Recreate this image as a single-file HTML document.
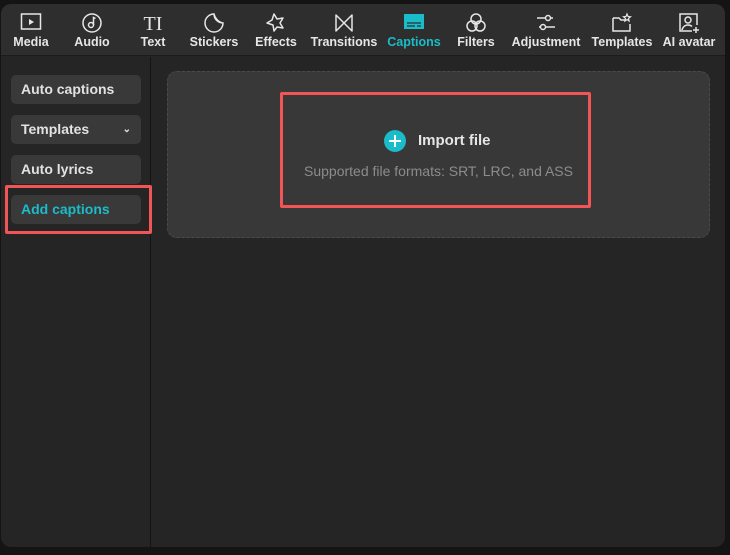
<!DOCTYPE html>
<html><head><meta charset="utf-8"><style>
*{margin:0;padding:0;box-sizing:border-box}
body{width:730px;height:555px;background:#141414;font-family:"Liberation Sans",sans-serif;position:relative;overflow:hidden}
.panel{position:absolute;left:1px;top:4px;width:724px;height:543px;background:#252525;border-radius:10px;overflow:hidden}
.top{position:absolute;left:0;top:0;width:724px;height:52px;background:#2e2e2e;border-bottom:1px solid #1c1c1c}
.it{position:absolute;top:0;height:52px;text-align:center;transform:translateX(-50%);color:#e6e6e6;font-size:12.5px;font-weight:bold;white-space:nowrap}
.it svg{position:absolute;left:50%;top:8px;transform:translateX(-50%)}
.it span{position:absolute;left:50%;top:31px;transform:translateX(-50%)}
.it.a{color:#1bbcc9}
.side{position:absolute;left:0;top:53px;width:150px;height:490px;border-right:1px solid #141414}
.btn{position:absolute;left:10px;width:130px;height:29px;background:#393939;border-radius:5px;color:#e2e2e2;font-size:14px;font-weight:bold;line-height:29px;padding-left:10px}
.red{position:absolute;border:3px solid #f25555;border-radius:2px}
.card{position:absolute;left:166px;top:67px;width:543px;height:167px;background:#383838;border:1px dashed #4a4a4a;border-radius:10px}
</style></head><body>
<div class="panel">
<div class="top">
<div class="it" style="left:30px"><svg width="22" height="20" viewBox="0 0 22 20"><rect x="1.5" y="2" width="19" height="15" fill="none" stroke="#e6e6e6" stroke-width="1.5"/><path d="M9 7l5 3-5 3z" fill="#e6e6e6"/></svg><span>Media</span></div>
<div class="it" style="left:91px"><svg width="22" height="22" viewBox="0 0 22 22"><circle cx="11" cy="11" r="9" fill="none" stroke="#e6e6e6" stroke-width="1.5"/><circle cx="10" cy="13" r="2.5" fill="none" stroke="#e6e6e6" stroke-width="1.5"/><path d="M12.5 13V5.5l2 1" fill="none" stroke="#e6e6e6" stroke-width="1.5"/></svg><span>Audio</span></div>
<div class="it" style="left:152px;"><svg width="24" height="22" viewBox="0 0 24 22"><text x="12" y="18" text-anchor="middle" font-family="Liberation Serif" font-weight="normal" font-size="20" fill="#e6e6e6">TI</text></svg><span>Text</span></div>
<div class="it" style="left:213px"><svg width="22" height="22" viewBox="0 0 22 22"><path d="M20 11a9 9 0 1 1-9-9c0 5 4 9 9 9zM11 2c1 4 4 8 9 9" fill="none" stroke="#e6e6e6" stroke-width="1.5"/></svg><span>Stickers</span></div>
<div class="it" style="left:275px"><svg width="22" height="22" viewBox="0 0 22 22"><path d="M9 2l3 5 6-1-3 5 3 5-6-1-3 4-1-6-6-2 5-3z" fill="none" stroke="#e6e6e6" stroke-width="1.5" stroke-linejoin="round"/></svg><span>Effects</span></div>
<div class="it" style="left:343px"><svg width="22" height="22" viewBox="0 0 22 22"><path d="M3 3v16l16-16v16z" fill="none" stroke="#e6e6e6" stroke-width="1.5" stroke-linejoin="round"/></svg><span>Transitions</span></div>
<div class="it a" style="left:413px"><svg width="22" height="20" viewBox="0 0 22 20"><rect x="1" y="2" width="20" height="15" fill="#1bbcc9"/><path d="M4 11h14M4 14h8M14 14h4" stroke="#2e2e2e" stroke-width="1.2"/></svg><span>Captions</span></div>
<div class="it" style="left:475px"><svg width="22" height="22" viewBox="0 0 22 22"><circle cx="11" cy="7" r="5" fill="none" stroke="#e6e6e6" stroke-width="1.5"/><circle cx="7" cy="14" r="5" fill="none" stroke="#e6e6e6" stroke-width="1.5"/><circle cx="15" cy="14" r="5" fill="none" stroke="#e6e6e6" stroke-width="1.5"/></svg><span>Filters</span></div>
<div class="it" style="left:545px"><svg width="22" height="22" viewBox="0 0 22 22"><path d="M2 6h16M4 15h16" stroke="#e6e6e6" stroke-width="1.5"/><circle cx="13" cy="6" r="2.5" fill="#2e2e2e" stroke="#e6e6e6" stroke-width="1.5"/><circle cx="8" cy="15" r="2.5" fill="#2e2e2e" stroke="#e6e6e6" stroke-width="1.5"/></svg><span>Adjustment</span></div>
<div class="it" style="left:621px"><svg width="22" height="22" viewBox="0 0 22 22"><path d="M2 6h6l2 2h4M19 12v7H2V6" fill="none" stroke="#e6e6e6" stroke-width="1.5"/><path d="M16 2l1 2.5 2.5.3-2 1.6.6 2.6-2.1-1.4-2.1 1.4.6-2.6-2-1.6 2.5-.3z" fill="none" stroke="#e6e6e6" stroke-width="1.2"/></svg><span>Templates</span></div>
<div class="it" style="left:688px"><svg width="22" height="22" viewBox="0 0 22 22"><path d="M14 19H2V2h17v11" fill="none" stroke="#e6e6e6" stroke-width="1.5"/><circle cx="10" cy="8" r="3" fill="none" stroke="#e6e6e6" stroke-width="1.5"/><path d="M4 18c1-4 4-5 6-5s3 .5 4 1.5" fill="none" stroke="#e6e6e6" stroke-width="1.5"/><path d="M18 15v6M15 18h6" stroke="#e6e6e6" stroke-width="1.5"/></svg><span>AI avatar</span></div>
</div>
<div class="side">
<div class="btn" style="top:18px">Auto captions</div>
<div class="btn" style="top:58px">Templates<span style="position:absolute;right:10px;top:0;font-size:10px">&#8964;</span></div>
<div class="btn" style="top:98px">Auto lyrics</div>
<div class="btn" style="top:138px;color:#1bbcc9">Add captions</div>
</div>
<div class="card"></div>
</div>
<div class="red" style="left:5px;top:185px;width:147px;height:49px"></div>
<div class="red" style="left:280px;top:92px;width:311px;height:116px"></div>
<div style="position:absolute;left:384px;top:130px;width:22px;height:22px;border-radius:50%;background:#1bbcc9"></div>
<div style="position:absolute;left:389px;top:140px;width:12px;height:2px;background:#fff"></div>
<div style="position:absolute;left:394px;top:135px;width:2px;height:12px;background:#fff"></div>
<div style="position:absolute;left:418px;top:132px;color:#e6e6e6;font-size:15px;font-weight:bold">Import file</div>
<div style="position:absolute;left:280px;width:317px;text-align:center;top:163px;color:#8c8c8c;font-size:14px">Supported file formats: SRT, LRC, and ASS</div>
</body></html>
